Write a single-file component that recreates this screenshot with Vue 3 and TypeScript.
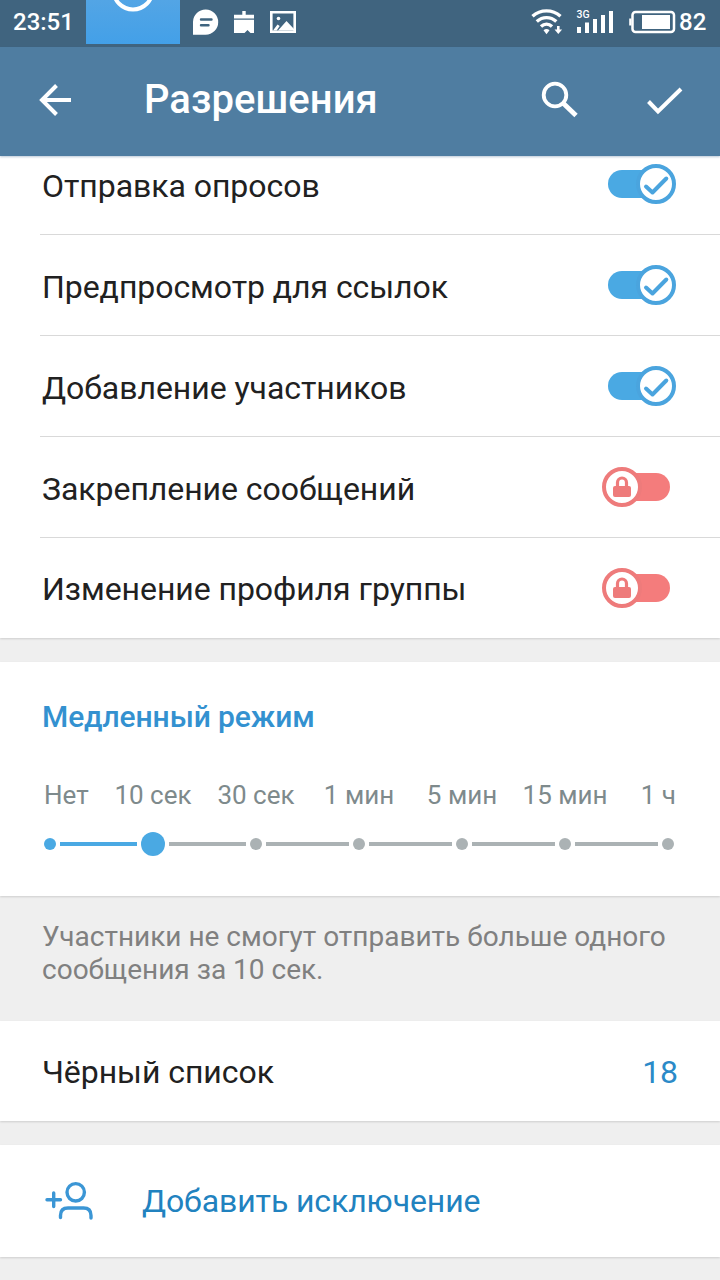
<script setup lang="ts">
interface Permission {
  label: string
  allowed: boolean
}

const permissions: Permission[] = [
  { label: 'Отправка опросов', allowed: true },
  { label: 'Предпросмотр для ссылок', allowed: true },
  { label: 'Добавление участников', allowed: true },
  { label: 'Закрепление сообщений', allowed: false },
  { label: 'Изменение профиля группы', allowed: false },
]

const delays: string[] = ['Нет', '10 сек', '30 сек', '1 мин', '5 мин', '15 мин', '1 ч']
const selected = 1
</script>

<template>
  <div class="screen">
    <header class="status">
      <span class="clock">23:51</span>
      <div class="tile">
        <svg width="94" height="44" viewBox="0 0 94 44"><circle cx="47" cy="-10" r="19.500" fill="none" stroke="#fff" stroke-width="4" /></svg>
      </div>
      <svg class="notes" width="106" height="30" viewBox="192 7 106 30" fill="#fff">
        <path d="M193 34.700V21.800a12.600 12.600 0 1 1 12.600 12.900z" />
        <path d="M201 19.500h10.500M201 25.300h7.500" stroke="#3f647f" stroke-width="2.400" stroke-linecap="round" />
        <path d="M242.300 11h3.400v3.800h8.300v3.700h-20v-3.700h8.300z" />
        <path d="M234 19.700h20v13.300h-3.500l-3-3-3 3H234z" />
        <path fill-rule="evenodd" d="M270 11h26v22h-26zM272.600 13.500v17h20.800v-17z" />
        <path d="M273 30.500l4.500-6 2.200 1.500-3 4.500zM278 30.500l8.500-9.500 7.500 8v1.500z" /><circle cx="278.500" cy="18.500" r="1.800" />
      </svg>
      <svg class="signals" width="148" height="30" viewBox="530 7 148 30" fill="none" stroke="#fff">
        <g stroke-width="3.400">
          <path d="M532.500 16.300c8-7.200 20-7.200 28 0" /><path d="M536.800 21.500c5.800-5.200 13.700-5.200 19.500 0" /><path d="M541 26.500c3.300-3 7.800-3 11 0" />
        </g>
        <path d="M543.500 30.200q3-2.600 6 0l-3 4z" fill="#fff" stroke="none" />
        <path d="M558.300 26v5" stroke-width="2.600" /><path d="M554.500 29.500h7.600l-3.800 4.500z" fill="#fff" stroke="none" />
        <path d="M579 33v-6M587 33V22.500M595 33V19M603 33V15M611 33V11" stroke-width="4" />
        <text x="576.500" y="18" class="net">3G</text>
        <rect x="632.500" y="12" width="41.500" height="20" rx="3" stroke-width="2.500" />
        <path d="M631.500 18.500h-2.300v7h2.300z" fill="#fff" stroke="none" />
        <path d="M642 15h28v14h-28z" fill="#fff" stroke="none" />
      </svg>
      <span class="battery">82</span>
    </header>

    <div class="appbar">
      <svg class="back" width="40" height="40" viewBox="35 80 40 40" fill="none" stroke="#fff" stroke-width="4"><path d="M71 100H41.500M56.500 85.500L42 100l14.500 14.500" /></svg>
      <h1>Разрешения</h1>
      <svg width="150" height="40" viewBox="535 80 150 40" fill="none" stroke="#fff">
        <circle cx="555" cy="95" r="11.300" stroke-width="3.800" />
        <path d="M563.500 103.500L576 115.500" stroke-width="4.800" />
        <path d="M648.500 101.500l9.500 10L681 89" stroke-width="4" />
      </svg>
    </div>

    <main>
      <section class="card permissions">
        <div v-for="p in permissions" :key="p.label" class="row">
          <span class="label">{{ p.label }}</span>
          <svg v-if="p.allowed" width="80" height="40" viewBox="0 0 80 40">
            <rect x="8" y="6" width="60" height="28" rx="14" fill="#4aa9e3" />
            <circle cx="56" cy="20" r="18" fill="#fff" stroke="#4aa4de" stroke-width="4" />
            <path d="M46 22.500l6.500 6L66.300 14.500" fill="none" stroke="#4aa4de" stroke-width="4" stroke-linecap="round" stroke-linejoin="round" />
          </svg>
          <svg v-else width="80" height="40" viewBox="0 0 80 40">
            <rect x="12" y="6" width="58" height="28" rx="14" fill="#f47c7c" />
            <circle cx="22" cy="20" r="18" fill="#fff" stroke="#ee7b7b" stroke-width="4" />
            <rect x="13" y="19" width="18" height="11" rx="2" fill="#ee7b7b" />
            <path d="M17.500 20v-4.500a4.500 4.500 0 0 1 9 0V20" fill="none" stroke="#ee7b7b" stroke-width="3.200" />
          </svg>
        </div>
      </section>

      <section class="card slow">
        <h2>Медленный режим</h2>
        <div class="delays">
          <div v-for="d in delays" :key="d" class="delay"><span>{{ d }}</span></div>
        </div>
        <div class="slider">
          <template v-for="(d, i) in delays" :key="d">
            <i v-if="i > 0" class="segment" :class="{ filled: i <= selected }"></i>
            <i class="stop" :class="{ filled: i <= selected, current: i === selected }"></i>
          </template>
        </div>
      </section>
      <p class="hint">Участники не смогут отправить больше одного<br />сообщения за 10 сек.</p>

      <section class="card blacklist">
        <span class="label">Чёрный список</span>
        <span class="count">18</span>
      </section>

      <section class="card exception">
        <svg width="52" height="44" viewBox="43 1179 52 44" fill="none" stroke="#3b96d5" stroke-width="3.400" stroke-linecap="round" stroke-linejoin="round">
          <path d="M47 1199.800h13.500M53.700 1193v13.500" />
          <circle cx="75.700" cy="1192.300" r="8.700" />
          <path d="M60.500 1217.500v-2c0-5 3-7.500 7.500-7.500h15.500c4.500 0 7.500 2.500 7.500 7.500v2.500" />
        </svg>
        <span class="action">Добавить исключение</span>
      </section>
    </main>
  </div>
</template>

<style>
body {
  margin: 0;
  background: #efefef;
}
</style>

<style scoped>
.screen {
  width: 720px;
  height: 1280px;
  overflow: hidden;
  background: #efefef;
  font-family: Roboto, 'Noto Sans', sans-serif;
  color: #212121;
}
svg { display: block; flex: none; }
.status {
  height: 47px;
  display: flex;
  box-sizing: border-box;
  background: #40647f;
  color: #fff;
  font-size: 24px;
  line-height: 44px;
  font-weight: 500;
}
.clock { width: 73px; padding-left: 13px; white-space: nowrap; }
.tile { width: 94px; height: 44px; background: linear-gradient(#53a5e5, #43a0e8); }
.notes { margin: 7px 0 0 12px; }
.signals { margin: 7px 0 0 232px; }
.battery { padding-left: 1px; }
.net { font-size: 10.5px; font-weight: 500; fill: #fff; stroke: none; }
.appbar {
  position: relative;
  z-index: 1;
  height: 109px;
  box-sizing: border-box;
  display: flex;
  align-items: center;
  padding: 0 35px 3px;
  background: #4f7da1;
  box-shadow: 0 1px 2px rgba(60, 100, 140, 0.35);
}
h1 {
  flex: 1;
  margin: 0 0 0 69px;
  font-size: 40px;
  font-weight: 500;
  line-height: 52px;
  letter-spacing: 0.05px;
  color: #fff;
}
.card { box-sizing: border-box; background: #fff; box-shadow: 0 1px 2px rgba(0, 0, 0, 0.14); }
.permissions { height: 504px; margin-top: -22px; }
.row { height: 101px; display: flex; align-items: center; padding: 0 40px 2px 42px; box-sizing: border-box; position: relative; }
.row .label { padding-top: 5px; }
.row:last-child .label { padding-top: 3px; }
.row + .row::before { content: ''; position: absolute; left: 40px; right: 0; top: -1px; height: 1px; background: #d9d9d9; }
.label, .count, .action { font-size: 32px; line-height: 40px; white-space: nowrap; letter-spacing: -0.05px; }
.label { flex: 1; }
.slow { margin-top: 24px; height: 234px; overflow: hidden; }
h2 {
  margin: 35px 0 0 42px;
  font-size: 30px;
  line-height: 40px;
  font-weight: 500;
  letter-spacing: -0.1px;
  color: #3391d0;
}
.delays {
  margin: 38px 0 0 50px;
  width: 618px;
  display: flex;
  justify-content: space-between;
  font-size: 26px;
  line-height: 40px;
  color: #7e8a8c;
}
.delay { width: 0; display: flex; justify-content: center; white-space: nowrap; }
.delay:first-child { justify-content: flex-start; margin-left: -6px; margin-right: 6px; }
.delay:last-child { justify-content: flex-end; margin-right: -8px; margin-left: 8px; }
.slider { display: flex; align-items: center; gap: 4px; height: 24px; margin: 17px 46px 0 44px; }
.stop { flex: none; width: 12px; height: 12px; border-radius: 50%; background: #abb2b4; }
.segment { width: 83px; height: 4px; background: #abb2b4; }
.stop.current { width: 24px; height: 24px; }
.stop.filled, .segment.filled { background: #4aa9e3; }
.segment.filled, .current + .segment { width: 77px; }
.hint {
  box-sizing: border-box;
  height: 125px;
  margin: 0;
  padding: 24px 0 0 42px;
  font-size: 28px;
  line-height: 33px;
  color: #808080;
  white-space: nowrap;
}
.blacklist { height: 100px; display: flex; align-items: center; padding: 0 42px; }
.blacklist .label, .blacklist .count { padding-top: 2px; }
.count { color: #2b8ac8; }
.exception { margin-top: 24px; height: 112px; display: flex; align-items: center; padding-left: 43px; }
.action { margin-left: 47px; color: #2182bf; letter-spacing: -0.1px; }
</style>
